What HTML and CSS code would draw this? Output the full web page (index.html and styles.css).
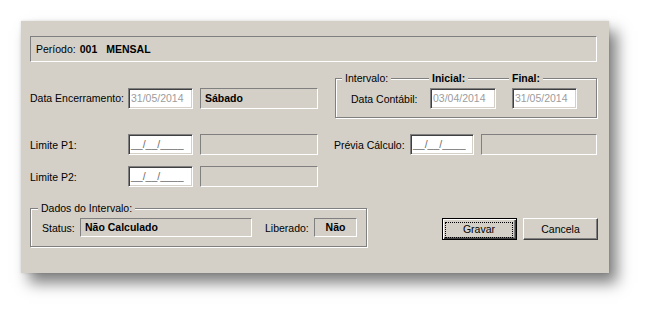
FILE: index.html
```html
<!DOCTYPE html>
<html lang="pt">
<head>
  <meta charset="UTF-8">
  <title>Encerramento de Período</title>
  <link rel="stylesheet" href="styles.css">
</head>
<body>
  <div class="dialog">
    <div class="periodo">
      <span>Período:</span><b class="cod">001</b><b class="desc">MENSAL</b>
    </div>

    <div class="row row-enc">
      <span class="lbl lbl-left">Data Encerramento:</span>
      <span class="edit edit-off">31/05/2014</span>
      <span class="static static-side bold">Sábado</span>
      <div class="group group-int">
        <div class="group-head grid-int">
          <span class="cap cap-int">Intervalo:</span>
          <b class="cap cap-ini">Inicial:</b>
          <b class="cap cap-fin">Final:</b>
        </div>
        <div class="group-body grid-int">
          <span class="lbl lbl-cont">Data Contábil:</span>
          <span class="edit edit-off edit-ini">03/04/2014</span>
          <span class="edit edit-off">31/05/2014</span>
        </div>
      </div>
    </div>

    <div class="row row-p1">
      <span class="lbl lbl-left">Limite P1:</span>
      <span class="edit mask">__/__/____</span>
      <span class="static static-side"></span>
      <span class="lbl lbl-previa">Prévia Cálculo:</span>
      <span class="edit mask edit-previa">__/__/____</span>
      <span class="static static-previa"></span>
    </div>

    <div class="row row-p2">
      <span class="lbl lbl-left">Limite P2:</span>
      <span class="edit mask">__/__/____</span>
      <span class="static static-side"></span>
    </div>

    <div class="row row-bottom">
      <div class="group group-dados">
        <div class="group-head">
          <span class="cap cap-dados">Dados do Intervalo:</span>
        </div>
        <div class="group-body row">
          <span class="lbl lbl-status">Status:</span>
          <span class="static static-status bold">Não Calculado</span>
          <span class="lbl lbl-lib">Liberado:</span>
          <span class="static static-lib bold">Não</span>
        </div>
      </div>
      <button class="btn btn-default"><span class="focus">Gravar</span></button>
      <button class="btn btn-cancel">Cancela</button>
    </div>
  </div>
</body>
</html>
```

FILE: styles.css
```css
html,body{
  margin : 0;
  background : #fff;
}
body{
  box-sizing : border-box;
  height : 100vh;
  padding : 21px 0 0 21px;
  font-family : "Liberation Sans", Arial, sans-serif;
  font-size : 10.5px;
  color : #000;
  overflow : hidden;
}
.bold{
  font-weight : bold
}

.dialog{
  box-sizing : border-box;
  width : 588px;
  height : 252px;
  padding : 15px 12px 0 9px;
  background : #d4d0c8;
  box-shadow : 0 0 3px rgba(0,0,0,.12), 8px 10px 14px rgba(0,0,0,.5);
}

/* faixa do período */
.periodo{
  box-sizing : border-box;
  height : 26px;
  display : flex;
  align-items : center;
  padding-left : 5px;
  border : 1px solid;
  border-color : #808080 #fff #fff #808080;
}
.periodo .cod{
  margin-left : 4px
}
.periodo .desc{
  margin-left : 9px
}

/* linhas */
.row{
  display : flex;
  align-items : center;
}
.row-enc{
  margin-top : 16px;
  height : 40px;
}
.row-p1{
  margin-top : 16px;
  height : 21px;
}
.row-p2{
  margin-top : 11px;
  height : 21px;
}
.row-bottom{
  margin-top : 21px;
  align-items : flex-start;
}

.lbl{
  flex : none;
  white-space : nowrap;
}
.lbl-left{
  width : 98px
}
.lbl-previa{
  width : 76px;
  margin-left : 16px;
}

/* campos de edição */
.edit{
  box-sizing : border-box;
  flex : none;
  width : 65px;
  height : 21px;
  line-height : 19px;
  padding-left : 2px;
  background : #fff;
  border : 1px solid;
  border-color : #808080 #fff #fff #808080;
  box-shadow : inset 1px 1px 0 #404040, inset -1px -1px 0 #d4d0c8;
  white-space : nowrap;
  overflow : hidden;
}
.edit-off{
  color : #9c9c9c
}
.mask{
  color : #6a6a6a
}
.edit-ini{
  width : 66px
}
.edit-previa{
  width : 64px
}

/* caixas estáticas */
.static{
  box-sizing : border-box;
  flex : none;
  height : 21px;
  line-height : 19px;
  padding-left : 4px;
  border : 1px solid;
  border-color : #808080 #fff #fff #808080;
  white-space : nowrap;
}
.static-side{
  width : 118px;
  margin-left : 7px;
}
.static-previa{
  width : 116px;
  margin-left : 7px;
}
.static-status{
  width : 172px;
  height : 19px;
  line-height : 17px;
}
.static-lib{
  width : 43px;
  height : 19px;
  line-height : 17px;
  padding-left : 0;
  text-align : center;
}

/* grupos */
.group{
  box-sizing : border-box;
  flex : none;
  border : 1px solid #808080;
  box-shadow : inset 1px 1px 0 #fff, 1px 1px 0 #fff;
}
.group-head{
  height : 13px;
  line-height : 13px;
  margin-top : -7px;
}
.cap{
  background : #d4d0c8;
  padding : 0 3px;
  justify-self : start;
  white-space : nowrap;
}
.group-body{
  margin-top : 3px
}

.group-int{
  width : 262px;
  height : 40px;
  margin-left : 17px;
}
.grid-int{
  display : grid;
  grid-template-columns : 78px 66px 65px;
  column-gap : 16px;
  align-items : center;
}
.cap-int{
  margin-left : 6px
}
.cap-ini{
  margin-left : -1px
}
.cap-fin{
  margin-left : -3px
}
.lbl-cont{
  margin-left : 15px
}

.group-dados{
  width : 337px;
  height : 39px;
  padding-left : 11px;
}
.group-dados .group-head{
  display : flex
}
.cap-dados{
  margin-left : -4px
}
.lbl-status{
  width : 38px
}
.lbl-lib{
  width : 49px;
  margin-left : 13px;
}

/* botões */
.btn{
  box-sizing : border-box;
  flex : none;
  width : 75px;
  height : 22px;
  margin-top : 10px;
  padding : 0;
  font-family : inherit;
  font-size : 10.5px;
  color : #000;
  background : #d4d0c8;
  border : 1px solid;
  border-color : #fff #404040 #404040 #fff;
  box-shadow : inset -1px -1px 0 #808080;
}
.btn-default{
  margin-left : 75px;
  border-color : #000;
  box-shadow : inset 1px 1px 0 #fff, inset -1px -1px 0 #404040, inset -2px -2px 0 #808080;
}
.btn-default .focus{
  display : block;
  margin : 3px 3px 2px 2px;
  height : 14px;
  line-height : 13px;
  border : 1px dotted #000;
}
.btn-cancel{
  margin-left : 6px
}
```
